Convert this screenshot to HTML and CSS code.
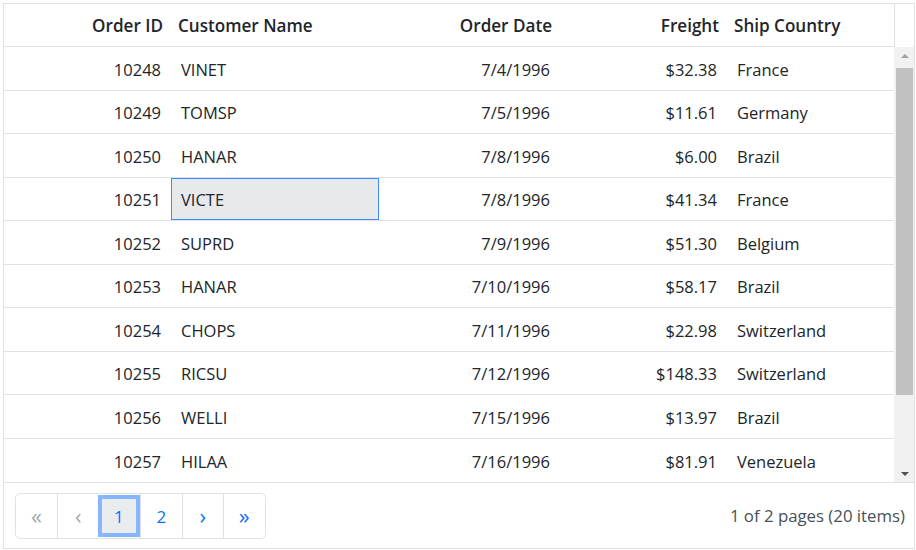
FILE: index.html
```html
<!DOCTYPE html>
<html>
<head>
<meta charset="utf-8">
<link rel="stylesheet" href="styles.css">
</head>
<body>
<div class="grid">
  <div class="head">
    <div class="cols hrow">
      <div class="th right">Order ID</div>
      <div class="th">Customer Name</div>
      <div class="th right">Order Date</div>
      <div class="th right">Freight</div>
      <div class="th">Ship Country</div>
    </div>
    <div class="gutter"></div>
  </div>
  <div class="main">
    <div class="rows">
      <div class="cols tr"><div class="td right">10248</div><div class="td">VINET</div><div class="td right">7/4/1996</div><div class="td right">$32.38</div><div class="td">France</div></div>
      <div class="cols tr"><div class="td right">10249</div><div class="td">TOMSP</div><div class="td right">7/5/1996</div><div class="td right">$11.61</div><div class="td">Germany</div></div>
      <div class="cols tr"><div class="td right">10250</div><div class="td">HANAR</div><div class="td right">7/8/1996</div><div class="td right">$6.00</div><div class="td">Brazil</div></div>
      <div class="cols tr"><div class="td right">10251</div><div class="td selected">VICTE</div><div class="td right">7/8/1996</div><div class="td right">$41.34</div><div class="td">France</div></div>
      <div class="cols tr"><div class="td right">10252</div><div class="td">SUPRD</div><div class="td right">7/9/1996</div><div class="td right">$51.30</div><div class="td">Belgium</div></div>
      <div class="cols tr"><div class="td right">10253</div><div class="td">HANAR</div><div class="td right">7/10/1996</div><div class="td right">$58.17</div><div class="td">Brazil</div></div>
      <div class="cols tr"><div class="td right">10254</div><div class="td">CHOPS</div><div class="td right">7/11/1996</div><div class="td right">$22.98</div><div class="td">Switzerland</div></div>
      <div class="cols tr"><div class="td right">10255</div><div class="td">RICSU</div><div class="td right">7/12/1996</div><div class="td right">$148.33</div><div class="td">Switzerland</div></div>
      <div class="cols tr"><div class="td right">10256</div><div class="td">WELLI</div><div class="td right">7/15/1996</div><div class="td right">$13.97</div><div class="td">Brazil</div></div>
      <div class="cols tr last"><div class="td right">10257</div><div class="td">HILAA</div><div class="td right">7/16/1996</div><div class="td right">$81.91</div><div class="td">Venezuela</div></div>
    </div>
    <div class="scrollbar">
      <div class="arrow up"></div>
      <div class="track"><div class="thumb"></div></div>
      <div class="arrow down"></div>
    </div>
  </div>
  <div class="pager">
    <div class="pages">
      <div class="page glyph disabled">«</div>
      <div class="page glyph disabled">‹</div>
      <div class="page active">1</div>
      <div class="page">2</div>
      <div class="page glyph">›</div>
      <div class="page glyph">»</div>
    </div>
    <div class="summary">1 of 2 pages (20 items)</div>
  </div>
</div>
</body>
</html>
```

FILE: styles.css
```css
* { box-sizing: border-box; }
html, body { margin: 0; padding: 0; background: #fff; }
body {
  font-family: "Open Sans", "Noto Sans", sans-serif;
  font-size: 16.5px;
  color: #212529;
  padding: 3px 0 0 3px;
}
.grid {
  width: 912px;
  height: 546px;
  border: 1px solid #dee2e6;
  display: flex;
  flex-direction: column;
}
.head {
  display: flex;
  height: 43px;
  flex: none;
}
.cols {
  display: grid;
  grid-template-columns: 167px 208px 181px 167px 167px;
  width: 890px;
}
.hrow {
  border-bottom: 1px solid #dee2e6;
}
.gutter {
  flex: 1;
  border-left: 1px solid #dee2e6;
}
.th {
  font-weight: 600;
  font-size: 17.1px;
  display: flex;
  align-items: center;
  padding: 0 8px 0 7px;
  white-space: nowrap;
}
.th.right { justify-content: flex-end; }
.main {
  display: flex;
  height: 435px;
  flex: none;
}
.rows {
  width: 890px;
  display: flex;
  flex-direction: column;
}
.tr {
  height: 43.5px;
  border-bottom: 1px solid #dee2e6;
}
.tr.last { border-bottom: none; }
.td {
  display: flex;
  align-items: center;
  padding: 2px 10px 0;
  white-space: nowrap;
}
.td.right { justify-content: flex-end; }
.td.selected {
  background: #e7eaed;
  border: 1px solid #3d8bfd;
  padding-left: 9px;
  padding-top: 1px;
}
.scrollbar {
  flex: 1;
  background: #f1f1f1;
  display: flex;
  flex-direction: column;
}
.arrow {
  height: 17px;
  flex: none;
  display: flex;
  align-items: center;
  justify-content: center;
  padding-left: 1px;
}
.arrow::before {
  content: "";
  width: 0;
  height: 0;
  border-left: 4px solid transparent;
  border-right: 4px solid transparent;
}
.arrow.up::before { border-bottom: 4px solid #a3a3a3; }
.arrow.down::before { border-top: 4px solid #505050; }
.track {
  flex: 1;
  padding: 4px 1px 0 2px;
}
.thumb {
  height: 327px;
  background: #c1c1c1;
}
.pager {
  flex: 1;
  border-top: 1px solid #dee2e6;
  display: flex;
  align-items: flex-start;
  justify-content: space-between;
  padding: 10px 9px 0 11px;
}
.pages {
  display: flex;
  height: 46px;
  border: 1px solid #dee2e6;
  border-radius: 5px;
}
.page {
  width: 41.5px;
  display: flex;
  align-items: center;
  justify-content: center;
  color: #0d6efd;
  font-size: 17px;
  border-left: 1px solid #dee2e6;
}
.page.glyph {
  font-size: 22px;
  padding-bottom: 3px;
}
.page:first-child { border-left: none; width: 41px; }
.page.disabled { color: #a0a7ad; }
.page.active {
  background: #e9ecef;
  box-shadow: inset 0 0 0 4px #86b7fe;
  margin: 1px 0 1px -1px;
  width: 42.5px;
  border-left: none;
}
.summary {
  align-self: center;
  margin-top: -10px;
  color: #495057;
  font-size: 16.8px;
}
```
